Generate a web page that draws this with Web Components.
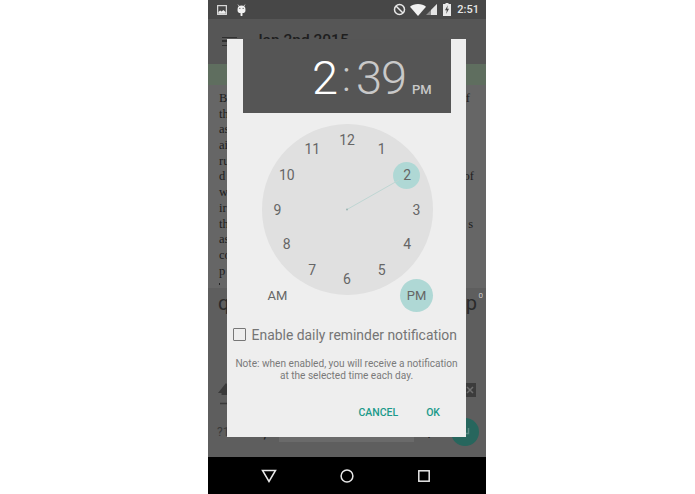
<!DOCTYPE html>
<html><head><meta charset="utf-8"><style>
html,body{margin:0;background:#fff;height:494px;overflow:hidden;font-family:Roboto,"Liberation Sans",sans-serif}
body{display:flex;justify-content:flex-start;padding-left:208px;box-sizing:border-box}
</style></head><body>
<phone-screen>
  <status-bar></status-bar>
  <app-bar>Jan 2nd 2015</app-bar>
  <green-banner></green-banner>
  <article-text></article-text>
  <key-board></key-board>
  <nav-bar></nav-bar>
  <time-dialog slot="overlay"></time-dialog>
</phone-screen>
<script>
function def(name,html,init){customElements.define(name,class extends HTMLElement{constructor(){super();this.attachShadow({mode:'open'}).innerHTML=html;if(init)init(this.shadowRoot)}})}

def('phone-screen',`<style>:host{display:flex;flex-direction:column;position:relative;width:278px;height:494px;overflow:hidden;background:#666}
::slotted(time-dialog){position:absolute;left:19px;top:39px}</style><slot></slot><slot name="overlay"></slot>`);

def('status-bar',`<style>:host{display:flex;align-items:center;height:19px;background:#474747;color:#e6e6e6;flex:none;position:relative}
svg{display:block;flex:none}.sp{flex:1}
.t{font:500 11px Roboto;margin:0 7px 0 6px}</style>
<svg style="margin-left:9px" width="10" height="10" viewBox="0 0 11 11"><rect x=".7" y=".7" width="9.600" height="9.600" fill="none" stroke="#ddd" stroke-width="1.300"/><path d="M1.500 9.500V7.600L3.500 6l1.600 1.200L7 5.600l2.500 2.200v1.700z" fill="#eee"/></svg>
<svg style="margin-left:10px;margin-top:1px" width="9" height="12.500" viewBox="0 0 11 15"><path d="M1.200.6 2.700 2.600M9.800.6 8.300 2.600" stroke="#eee" stroke-width=".9" fill="none"/><path d="M.7 6C.7 3.200 2.800 1.800 5.500 1.800S10.300 3.200 10.300 6V8C10.300 9.800 8.500 10.800 7 10.800H4C2.500 10.800.7 9.800.7 8z" fill="#f2f2f2"/><rect x="4.300" y="10" width="2.400" height="4.600" rx="1" fill="#f2f2f2"/><circle cx="3.500" cy="5.200" r=".8" fill="#555"/><circle cx="7.500" cy="5.200" r=".8" fill="#555"/></svg>
<span class="sp"></span>
<svg width="13" height="13" viewBox="0 0 13 13"><circle cx="6.500" cy="6.500" r="5" fill="none" stroke="#e8e8e8" stroke-width="1.500"/><path d="M3 3l7 7" stroke="#e8e8e8" stroke-width="1.500"/></svg>
<svg style="margin-left:4px" width="16" height="12" viewBox="0 0 16 12"><path d="M0 2.800C2 1 4.800 0 8 0s6 1 8 2.800L8 12z" fill="#f2f2f2"/></svg>
<svg width="11" height="11" viewBox="0 0 11 11"><path d="M11 0V11H0z" fill="#8c8c8c"/><path d="M11 0V11H5V6z" fill="#e4e4e4"/></svg>
<svg style="margin-left:6px" width="8" height="13" viewBox="0 0 8 13"><path d="M2.500 0h3v1H8v12H0V1h2.500z" fill="#e8e8e8"/><path d="M4.800 2.200 2 7.200h1.800L3.200 11 6 5.800H4.200z" fill="#474747"/></svg>
<span class="t">2:51</span>`);

def('app-bar',`<style>:host{display:flex;align-items:center;gap:17px;height:45px;background:#565656;flex:none;padding-left:14px;box-sizing:border-box;color:#1e1e1e;font:500 15.500px Roboto}
i{display:block;width:15px;height:9px;border-top:1.500px solid #303030;border-bottom:1.500px solid #303030;position:relative;box-sizing:border-box}
i::after{content:"";position:absolute;left:0;right:0;top:2.300px;height:1.500px;background:#303030}
span{margin-top:-4px}</style><i></i><span><slot></slot></span>`);

def('green-banner',`<style>:host{display:block;height:21px;background:#5f6e5f;flex:none}</style>`);

const L=[['B','f',5],['th','',0],['as','',0],['ai','',0],['ru','',0],['d','of',1],['w','',0],['ir','',0],['th','s',2],['as','',0],['co','',0],['p','',0]];
def('article-text',`<style>:host{display:block;flex:none;height:203px;padding:6px 11px 0;box-sizing:border-box;background:#666;color:#1d1d1d;font:12.500px/15.700px "Liberation Serif",serif;overflow:hidden}
div{display:flex;justify-content:space-between;height:15.700px}
i{display:block;width:1px;height:2px;background:#222;margin-top:4px}</style>`+L.map(l=>`<div><span>${l[0]}</span><span style="margin-right:${l[2]}px">${l[1]}</span></div>`).join('')+`<i></i>`);

def('key-board',`<style>:host{display:flex;flex-direction:column;flex:1;background:#5e5e5e;color:#2b2b2b;position:relative}
.r{display:flex;justify-content:space-between;align-items:center}
.a{height:33px;font:20px Roboto;align-items:flex-end;line-height:28px;padding:0 9px 4px 10px;box-sizing:border-box}
.b{height:90px;padding:62px 10px 0 10px;align-items:flex-start;box-sizing:border-box}
.c{height:42px;font:12px Roboto;color:#3a3a3a;padding:0 7px 0 9px;justify-content:flex-start}
.sup{position:absolute;right:3px;top:3px;font:8px Roboto;color:#ccc}
.enter{width:28px;height:28px;border-radius:50%;background:#27665d;display:flex;align-items:center;justify-content:center;margin-left:auto}
.bar{width:135px;height:5px;margin:15px 0 0 13px;background:#6a6a6a}
.k{font:14px Roboto;color:#222;margin-top:2px}</style>
<span class="sup">0</span>
<div class="r a"><span>q</span><span>p</span></div>
<div class="r b">
<svg width="16" height="22" viewBox="0 0 16 22"><path d="M8 0 0 10h3.500v2h9v-2H16z" fill="#3a3a3a"/><path d="M2 20.500h14" stroke="#3a3a3a" stroke-width="1.500"/></svg>
<svg width="14" height="14" viewBox="0 0 14 14"><rect width="14" height="14" fill="#3c3c3c"/><path d="M5 4l6 6M11 4l-6 6" stroke="#6e6e6e" stroke-width="1.500"/></svg>
</div>
<div class="r c"><span>?1</span><span class="k" style="margin-left:34px">,</span><span class="bar"></span><span class="k" style="margin-left:13px">.</span><span class="enter"><svg width="10" height="9" viewBox="0 0 10 9"><path d="M8.500 0v5.500H1" fill="none" stroke="#5b8c84" stroke-width="1.400"/></svg></span></div>`);

def('nav-bar',`<style>:host{display:flex;align-items:center;height:37px;background:#000;flex:none;padding-left:53px;box-sizing:border-box}
svg{flex:none}</style>
<svg width="16" height="14" viewBox="0 0 16 14"><path d="M1.500 1.500h13L8 12.500z" fill="none" stroke="#e8e8e8" stroke-width="1.500"/></svg>
<svg style="margin-left:63px" width="14" height="14" viewBox="0 0 14 14"><circle cx="7" cy="7" r="5.900" fill="none" stroke="#e8e8e8" stroke-width="1.500"/></svg>
<svg style="margin-left:64px" width="12" height="12" viewBox="0 0 12 12"><rect x=".8" y=".8" width="10.400" height="10.400" fill="none" stroke="#e8e8e8" stroke-width="1.500"/></svg>`);

def('time-header',`<style>:host{display:flex;align-items:baseline;height:74px;margin:0 15px 0 16px;background:#555;color:#c9c9c9;box-sizing:border-box;padding:11px 0 0 69px;font:300 47px/56px Roboto}
.h{color:#fff}.c{margin:0 5px 0 4px;position:relative;top:-3px;font-size:42px}
.m{letter-spacing:-1px}.p{font:500 13px Roboto;margin-left:6px}</style>
<span class="h">2</span><span class="c">:</span><span class="m">39</span><span class="p">PM</span>`);

def('clock-face',`<style>:host{display:block;position:relative;width:239px;height:199px;font:14px Roboto;color:#666}
.d{position:absolute;left:35px;top:11px;width:171px;height:171px;border-radius:50%;background:#e0e0e0}
.s{position:absolute;border-radius:50%;background:#afd8d5}
.n{position:absolute;transform:translate(-50%,-50%);line-height:1;white-space:nowrap}
svg{position:absolute;left:0;top:0}
</style><div class="d"></div><div class="s" style="left:166px;top:48.500px;width:27px;height:27px"></div>
<svg width="239" height="199"><path d="M120 96.500 172 67" stroke="#bfd6d3" stroke-width="1"/><circle cx="120" cy="96.500" r="1" fill="#9db5b2"/></svg>
<div class="s" style="left:173px;top:166px;width:33px;height:33px"></div>
<span class="n" style="left:50.500px;top:182px;font-size:13px">AM</span>
<span class="n" style="left:189.500px;top:182px;font-size:13px">PM</span>`,
r=>{for(let i=1;i<=12;i++){const a=i*Math.PI/6,e=document.createElement('span');e.className='n';e.textContent=i;e.style.left=(120+69.500*Math.sin(a))+'px';e.style.top=(96.500-69.500*Math.cos(a))+'px';r.appendChild(e)}});

def('check-row',`<style>:host{display:flex;align-items:center;gap:6px;padding-left:6px;height:20px;margin-top:12.500px;color:#757575;font:13.900px/20px Roboto;white-space:nowrap}
i{border:1.700px solid #777;border-radius:1px;flex:none;width:10.600px;height:10.600px}</style><i></i><span>Enable daily reminder notification</span>`);

def('note-text',`<style>:host{display:block;margin-top:13.500px;text-align:center;color:#7a7a7a;font:10.100px/12px Roboto;white-space:nowrap}</style>Note: when enabled, you will receive a notification<br>at the selected time each day.`);

def('dialog-actions',`<style>:host{display:flex;justify-content:flex-end;gap:28px;padding:23px 26px 0 0;color:#1b9a8a;font:500 10.500px/16px Roboto}</style><span>CANCEL</span><span>OK</span>`);

def('time-dialog',`<style>:host{display:block;width:239px;height:398px;background:#eee;box-sizing:border-box}</style>
<time-header></time-header><clock-face></clock-face><check-row></check-row><note-text></note-text><dialog-actions></dialog-actions>`);
</script>
</body></html>
